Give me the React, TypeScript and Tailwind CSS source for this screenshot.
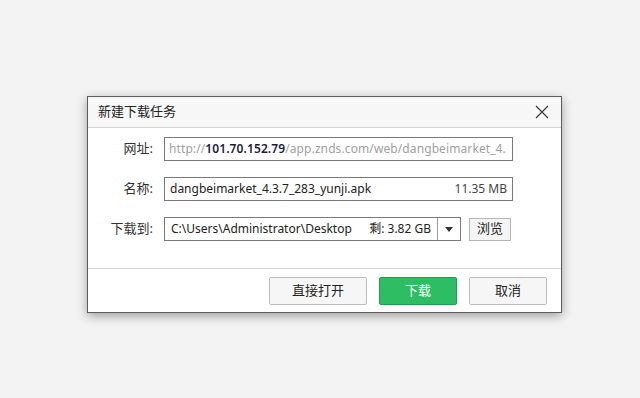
import React from "react";

const font = { fontFamily: '"Noto Sans", "Noto Sans CJK SC", sans-serif' };

const Label = ({ children }: { children: React.ReactNode }) => (
  <div className="w-[65px] text-right text-[13px] text-[#333]">{children}</div>
);

const App = () => {
  return (
    <div
      className="w-[640px] h-[398px] bg-[#f3f3f3] pt-[96px] pl-[87px]"
      style={font}
    >
      <div className="w-[475px] h-[217px] bg-white border border-[#5c5c5c] shadow-[0_3px_10px_rgba(0,0,0,0.35)] flex flex-col">
        {/* title bar */}
        <div className="h-[31px] shrink-0 bg-[#f7f7f7] border-b border-[#d4d4d4] flex items-center justify-between pl-[10px] pr-[12px]">
          <span className="text-[13px] text-[#222]">新建下载任务</span>
          <svg width="14" height="14" viewBox="0 0 14 14">
            <path d="M1 1L13 13M13 1L1 13" stroke="#333" strokeWidth="1.1" />
          </svg>
        </div>

        {/* body */}
        <div className="h-[140px] shrink-0 flex flex-col gap-[16px] pt-[9px]">
          <div className="flex items-center gap-[11px] h-[24px]">
            <Label>网址:</Label>
            <div className="w-[349px] h-[24px] border border-[#7a7a7a] flex items-center px-[4px] text-[12px] tracking-[0.1px] text-[#a0a0a0] overflow-hidden whitespace-nowrap">
              http://
              <span className="text-[#1b1b3a] font-semibold">101.70.152.79</span>
              /app.znds.com/web/dangbeimarket_4.
            </div>
          </div>
          <div className="flex items-center gap-[11px] h-[24px]">
            <Label>名称:</Label>
            <div className="w-[349px] h-[24px] border border-[#7a7a7a] flex items-center justify-between px-[5px] text-[12px] text-[#222] whitespace-nowrap">
              <span>dangbeimarket_4.3.7_283_yunji.apk</span>
              <span className="text-[#444]">11.35 MB</span>
            </div>
          </div>
          <div className="flex items-center gap-[11px] h-[24px]">
            <Label>下载到:</Label>
            <div className="flex items-center gap-[8px]">
              <div className="w-[297px] h-[24px] border border-[#7a7a7a] flex text-[12px] text-[#222]">
                <div className="flex-1 flex items-center justify-between px-[6px] whitespace-nowrap">
                  <span>C:\Users\Administrator\Desktop</span>
                  <span>剩: 3.82 GB</span>
                </div>
                <div className="w-[23px] border-l border-[#9a9a9a] flex items-center justify-center">
                  <svg width="8" height="5" viewBox="0 0 8 5">
                    <path d="M0 0H8L4 5Z" fill="#333" />
                  </svg>
                </div>
              </div>
              <button className="w-[42px] h-[23px] border border-[#b5b5b5] bg-[#f4f4f4] text-[13px] text-[#222] flex items-center justify-center">
                浏览
              </button>
            </div>
          </div>
        </div>

        {/* footer */}
        <div className="flex-1 border-t border-[#d6d6d6] flex items-center justify-end gap-[12px] pr-[14px]">
          <button className="w-[98px] h-[28px] border border-[#bdbdbd] bg-[#f6f6f6] rounded-[2px] text-[13px] text-[#222]">
            直接打开
          </button>
          <button className="w-[78px] h-[28px] border border-[#1f9e4c] bg-[#2ebd63] rounded-[2px] text-[13px] text-white">
            下载
          </button>
          <button className="w-[78px] h-[28px] border border-[#bdbdbd] bg-[#f6f6f6] rounded-[2px] text-[13px] text-[#222]">
            取消
          </button>
        </div>
      </div>
    </div>
  );
};

export default App;
